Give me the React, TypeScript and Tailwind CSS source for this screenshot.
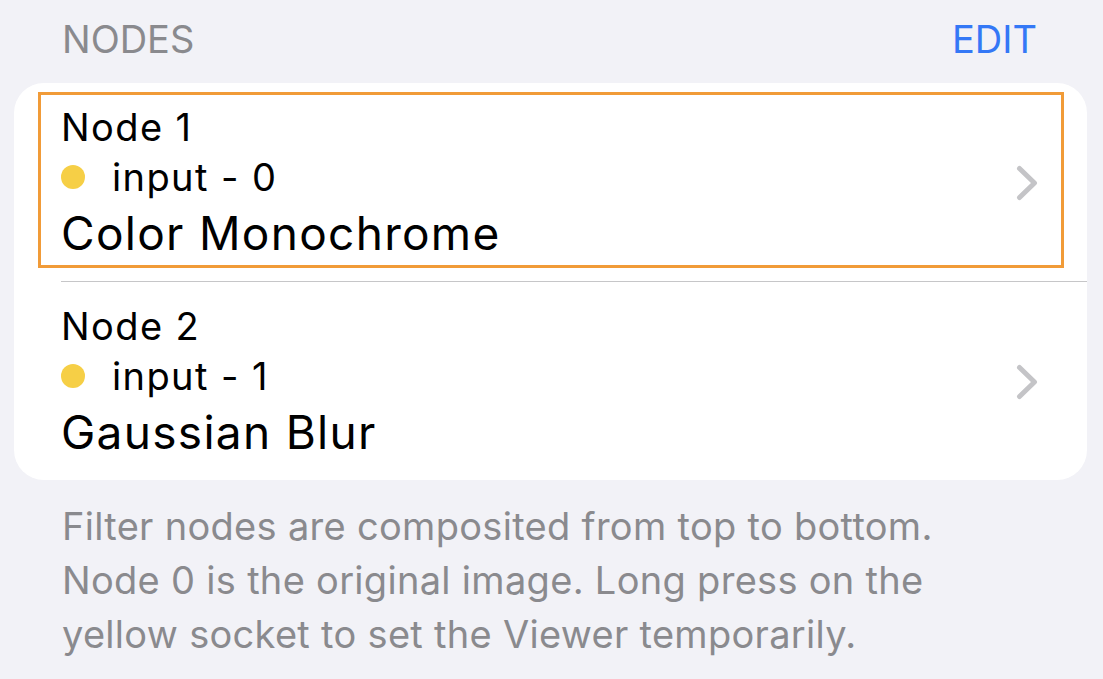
type NodeRow = { title: string; input: string; filter: string; selected?: boolean };

const nodes: NodeRow[] = [
  { title: "Node 1", input: "input - 0", filter: "Color Monochrome", selected: true },
  { title: "Node 2", input: "input - 1", filter: "Gaussian Blur" },
];

const Chevron = () => (
  <svg width="22" height="36" viewBox="0 0 22 36" fill="none" className="shrink-0">
    <path
      d="M3.5 3.5 L18.5 18 L3.5 32.5"
      stroke="#c4c4c7"
      strokeWidth="5"
      strokeLinecap="round"
      strokeLinejoin="round"
    />
  </svg>
);

const Row = ({ node }: { node: NodeRow }) => (
  <div className="relative flex items-center h-[198px] pl-[47px] pr-[49px] pt-[1px]">
    {node.selected && (
      <div className="absolute top-[9px] bottom-[13px] left-[24px] right-[23px] border-[3px] border-[#f19b38] pointer-events-none" />
    )}
    <div className="flex-1 flex flex-col text-black">
      <div className="text-[38px] leading-[50px] tracking-[1.4px]">{node.title}</div>
      <div className="flex items-center text-[38px] leading-[50px] tracking-[1.4px]">
        <span className="w-[24px] h-[24px] rounded-full bg-[#f6cf46] mr-[27px]" />
        <span>{node.input}</span>
      </div>
      <div className="text-[46px] leading-[62px] tracking-[1.3px]">{node.filter}</div>
    </div>
    <Chevron />
  </div>
);

export default function App() {
  return (
    <div
      className="w-full h-[679px] bg-[#f2f2f7] overflow-hidden"
      style={{ fontFamily: "Inter, 'Noto Sans', sans-serif" }}
    >
      <div className="flex justify-between pt-[19px] pl-[62px] pr-[66px] mb-[24px] text-[38px] leading-[40px]">
        <span className="text-[#8a8a8e]">NODES</span>
        <span className="text-[#3478f6]">EDIT</span>
      </div>

      <div className="ml-[14px] mr-[16px] bg-white rounded-[30px]">
        {nodes.map((node, i) => (
          <div key={node.title}>
            {i > 0 && <div className="ml-[47px] h-px bg-[#c6c6c8]" />}
            <Row node={node} />
          </div>
        ))}
      </div>

      <p className="mt-[19px] pl-[62px] text-[38px] leading-[54px] tracking-[0.3px] text-[#8a8a8e]">
        Filter nodes are composited from top to bottom.
        <br />
        Node 0 is the original image. Long press on the
        <br />
        yellow socket to set the Viewer temporarily.
      </p>
    </div>
  );
}
